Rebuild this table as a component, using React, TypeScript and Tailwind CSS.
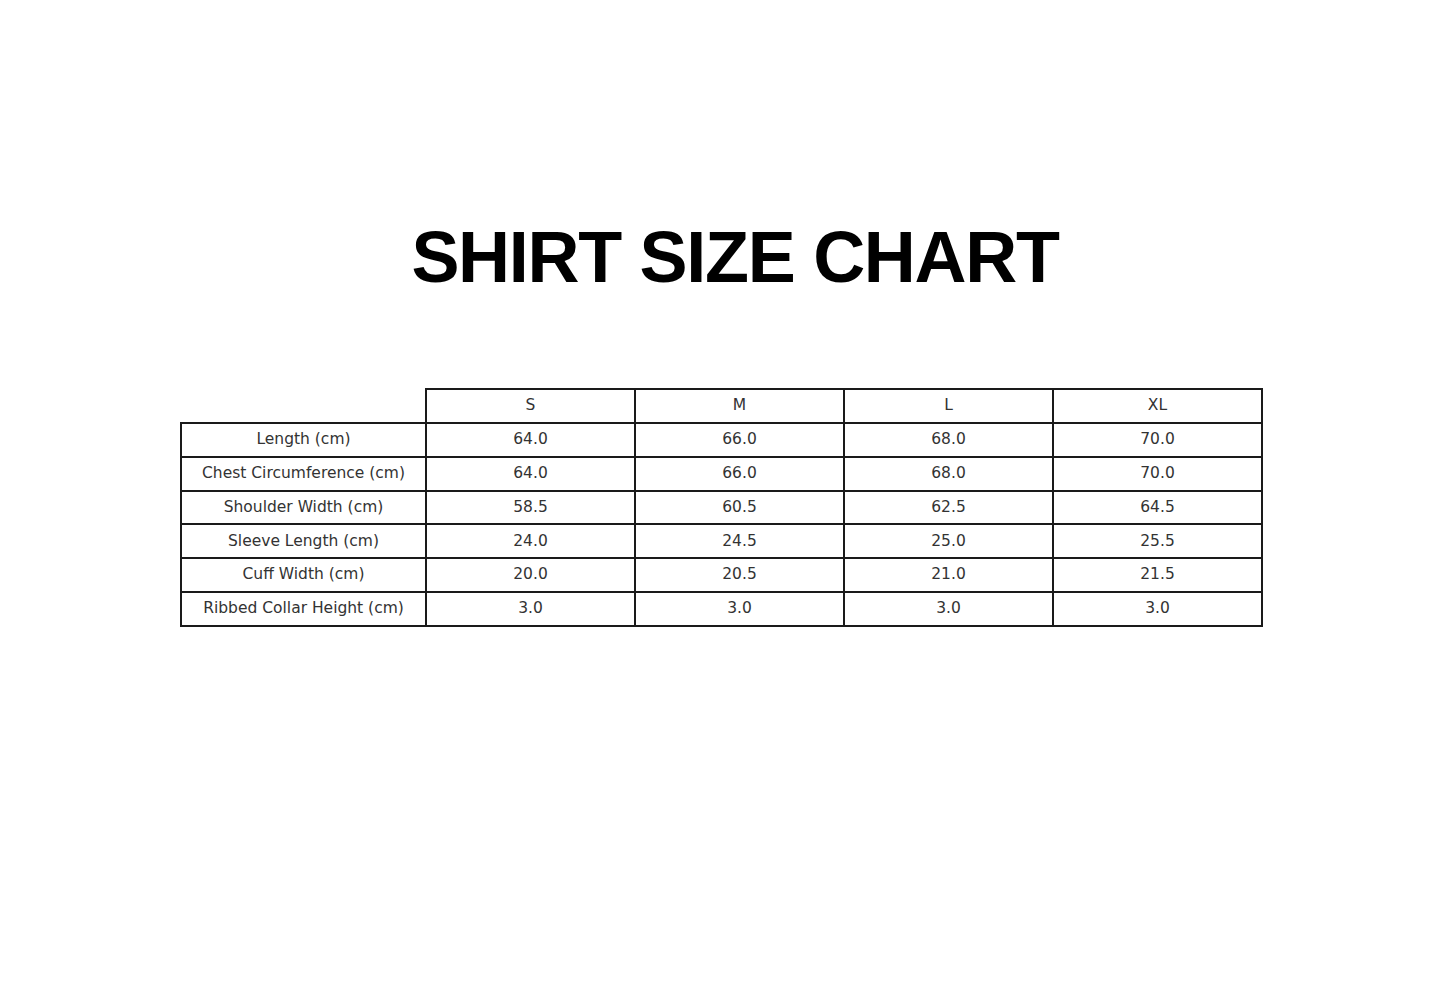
const sizes = ["S", "M", "L", "XL"];

const rows: { label: string; values: string[] }[] = [
  { label: "Length (cm)", values: ["64.0", "66.0", "68.0", "70.0"] },
  { label: "Chest Circumference (cm)", values: ["64.0", "66.0", "68.0", "70.0"] },
  { label: "Shoulder Width (cm)", values: ["58.5", "60.5", "62.5", "64.5"] },
  { label: "Sleeve Length (cm)", values: ["24.0", "24.5", "25.0", "25.5"] },
  { label: "Cuff Width (cm)", values: ["20.0", "20.5", "21.0", "21.5"] },
  { label: "Ribbed Collar Height (cm)", values: ["3.0", "3.0", "3.0", "3.0"] },
];

const cell =
  "border-2 border-[#1a1a1a] text-center align-middle p-0 font-normal";

export default function App() {
  return (
    <div className="min-h-screen w-full bg-white flex flex-col items-center">
      {/* Title */}
      <h1 className="pt-[221px] pl-[25px] text-[72px] leading-none font-bold tracking-[-1.3px] text-black font-['Liberation_Sans',Arial,sans-serif]">
        SHIRT SIZE CHART
      </h1>

      {/* Size table */}
      <table className="mt-[95px] mr-[2px] table-fixed border-collapse w-[1081px] text-[15.5px] text-[#333] font-['DejaVu_Sans',sans-serif]">
        <colgroup>
          <col className="w-[245px]" />
          <col className="w-[209px]" />
          <col className="w-[209px]" />
          <col className="w-[209px]" />
          <col className="w-[209px]" />
        </colgroup>
        <thead>
          <tr className="h-[34px]">
            <th className="border-0 p-0" />
            {sizes.map((s) => (
              <th key={s} className={cell}>
                {s}
              </th>
            ))}
          </tr>
        </thead>
        <tbody>
          {rows.map((r) => (
            <tr key={r.label} className="h-[33.8px]">
              <td className={cell}>{r.label}</td>
              {r.values.map((v, i) => (
                <td key={i} className={cell}>
                  {v}
                </td>
              ))}
            </tr>
          ))}
        </tbody>
      </table>
    </div>
  );
}
